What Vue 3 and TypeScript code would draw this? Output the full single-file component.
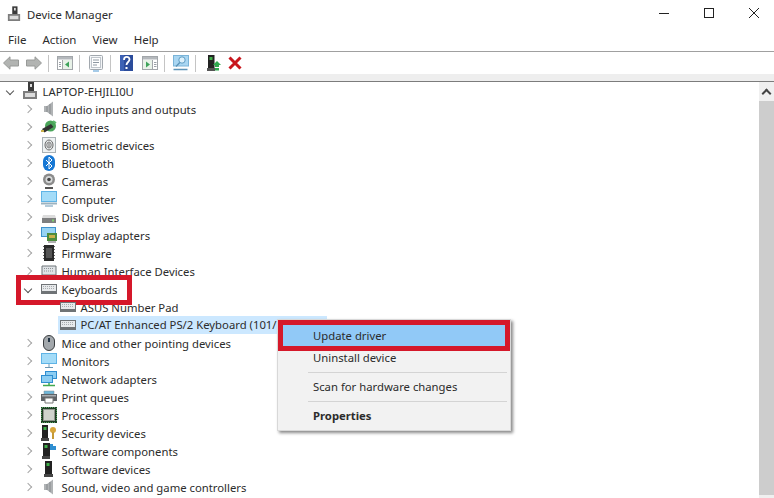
<template>
  <div class="window">
    <header class="titlebar">
      <svg class="app-icon" width="14" height="16" viewBox="0 0 16 18">
        <use href="#pc" />
      </svg>
      <span class="title">Device Manager</span>
      <div class="win-controls">
        <svg width="10" height="10" viewBox="0 0 10 10"><path d="M0 5.500h10" stroke="#222" fill="none" /></svg>
        <svg width="10" height="10" viewBox="0 0 10 10"><rect x=".5" y=".5" width="9" height="9" stroke="#222" fill="none" /></svg>
        <svg width="10" height="10" viewBox="0 0 10 10"><path d="M0 0l10 10M10 0L0 10" stroke="#222" fill="none" /></svg>
      </div>
    </header>
    <nav class="menubar">
      <span v-for="m in menus" :key="m">{{ m }}</span>
    </nav>
    <div class="toolbar">
      <svg class="back" width="16" height="14" viewBox="0 0 16 14"><path d="M.5 7L7 .8V4h8.500v6H7v3.200z" fill="#b2b4b2" stroke="#989a98" /></svg>
      <svg class="fwd" width="16" height="14" viewBox="0 0 16 14"><path d="M15.500 7L9 .8V4H.5v6H9v3.200z" fill="#b2b4b2" stroke="#989a98" /></svg>
      <i class="sep"></i>
      <svg width="16" height="14" viewBox="0 0 16 14">
        <rect x=".5" y=".5" width="15" height="13" fill="#fff" stroke="#a2a6aa" />
        <rect x="1" y="1" width="14" height="2.500" fill="#b4b8bc" />
        <path d="M5.500 4v9" stroke="#a2a6aa" />
        <path d="M2 6.500h2M2 8.500h2M2 10.500h2" stroke="#9aa0a6" />
        <rect x="6" y="4" width="9" height="9" fill="#e8f2e8" />
        <path d="M12 5.500v6L8 8.500z" fill="#3ea35a" />
      </svg>
      <i class="sep"></i>
      <svg class="doc" width="16" height="17" viewBox="0 0 16 17">
        <rect x="1.500" y=".5" width="13" height="14" rx="1" fill="#f4f6f8" stroke="#a2a8ae" />
        <rect x="3.500" y="2.500" width="9" height="10" fill="#fff" stroke="#c0c6cc" />
        <path d="M5 5h6M5 7.500h6M5 10h4" stroke="#8e98a2" />
        <path d="M5 16h6" stroke="#6aa8d8" stroke-width="1.200" />
      </svg>
      <i class="sep"></i>
      <svg class="help" width="13" height="16" viewBox="0 0 13 16">
        <rect width="13" height="16" fill="#2b4c9b" />
        <rect width="4" height="16" fill="#3d62b5" />
        <path d="M4 5c0-4 5.500-4 5.500-.5C9.500 7 6.500 7 6.500 10" stroke="#fff" stroke-width="1.800" fill="none" />
        <path d="M5.500 12h2v2h-2z" fill="#fff" />
      </svg>
      <svg class="panel" width="16" height="14" viewBox="0 0 16 14">
        <rect x=".5" y=".5" width="15" height="13" fill="#fff" stroke="#a2a6aa" />
        <rect x="1" y="1" width="14" height="2.500" fill="#b4b8bc" />
        <path d="M10.500 4v9" stroke="#a2a6aa" />
        <rect x="1" y="4" width="9" height="9" fill="#e8f2e8" />
        <path d="M4 5.500v6l4-3z" fill="#3ea35a" />
        <path d="M12 6.500h2.500M12 8.500h2.500M12 10.500h2.500" stroke="#9aa0a6" />
      </svg>
      <i class="sep"></i>
      <svg width="16" height="16" viewBox="0 0 16 16">
        <rect x=".5" y=".5" width="15" height="10.500" fill="#a9d6f2" stroke="#7ab4d8" />
        <circle cx="9" cy="5" r="3.200" fill="#dcf0fb" stroke="#5d9cc4" />
        <path d="M6.800 7.500L3 11.500M.5 14.500h14" stroke="#5d94b8" stroke-width="1.300" />
      </svg>
      <i class="sep"></i>
      <svg class="scan" width="14" height="16" viewBox="0 0 14 16">
        <rect x="1" y="0" width="6.500" height="13" fill="#222" />
        <rect x="2.500" y="2" width="3" height="3" fill="#3fae49" />
        <path d="M0 13h8v3H0z" fill="#555" />
        <path d="M10 6l4 4h-2v2H8v-2H6z" fill="#2fa84f" />
        <path d="M8 13h4v2.500H8z" fill="#2fa84f" />
      </svg>
      <svg class="remove" width="14" height="14" viewBox="0 0 14 14"><path d="M1.500 1.500l11 11M12.500 1.500l-11 11" stroke="#c8161d" stroke-width="3" /></svg>
    </div>
    <div class="strip"></div>
    <div class="content">
      <main class="tree">
        <div class="row root">
          <span class="caret open"></span>
          <svg class="icon" width="16" height="18" viewBox="0 0 16 18"><use href="#pc" /></svg>
          <span>LAPTOP-EHJILI0U</span>
        </div>
        <template v-for="d in devices" :key="d.name">
          <div class="row" :class="{ child: d.child }">
            <span class="caret" :class="{ open: d.open, none: d.child }"></span>
            <svg class="icon" width="16" height="16" viewBox="0 0 16 16" v-html="icons[d.icon]"></svg>
            <span class="label" :class="{ selected: d.selected }">{{ d.name }}</span>
          </div>
        </template>
        <div class="mark-keyboards"></div>
      </main>
      <aside class="scrollbar">
        <div class="up"><span></span></div>
        <div class="thumb"></div>
      </aside>
      <ul class="menu">
        <li class="active">Update driver</li>
        <li>Uninstall device</li>
        <li class="divider"></li>
        <li>Scan for hardware changes</li>
        <li class="divider"></li>
        <li class="bold">Properties</li>
      </ul>
    </div>
    <svg width="0" height="0" class="defs">
      <symbol id="pc" viewBox="0 0 16 18">
        <rect x="6" y="0" width="6" height="10" fill="#3a3a3a" />
        <rect x="8" y="2" width="2" height="3" fill="#ddd" />
        <path d="M1 9h14v8H1z" fill="#7d7d7d" />
        <path d="M3 11h10v4H3z" fill="#dcdcdc" />
      </symbol>
    </svg>
  </div>
</template>

<script setup lang="ts">
interface Device {
  name: string
  icon: string
  open?: boolean
  child?: boolean
  selected?: boolean
}

const menus = ['File', 'Action', 'View', 'Help']

const icons: Record<string, string> = {
  audio: '<path d="M3 5h3l6-4.500v15L6 11H3z" fill="#b0b3b5"/><path d="M6 5v6M9 3v10" stroke="#85898c"/>',
  battery: '<circle cx="9.500" cy="7" r="5.500" fill="#4aa55a"/><path d="M1 10l9-5 2.500 3-9 5.500z" fill="#333"/><path d="M12 2l3 2" stroke="#5cb86c" stroke-width="2"/><path d="M0 12h3" stroke="#c9b04a" stroke-width="2"/>',
  bio: '<rect x="1.500" y=".5" width="13" height="15" fill="#eef2f3" stroke="#a9b1b5"/><ellipse cx="8" cy="8" rx="4" ry="5" fill="none" stroke="#666"/><ellipse cx="8" cy="8" rx="2.200" ry="3" fill="none" stroke="#777"/><path d="M8 6v4" stroke="#666"/>',
  bt: '<rect x="2" y="0" width="12" height="16" rx="6" fill="#1577d4"/><path d="M5 5l6 6-3 3V2l3 3-6 6" stroke="#fff" fill="none"/>',
  camera: '<circle cx="8" cy="6.500" r="6" fill="#8b8b8b"/><circle cx="8" cy="6.500" r="3.500" fill="#d7dadb"/><circle cx="8" cy="6.500" r="1.800" fill="#444"/><path d="M4 15h8" stroke="#555" stroke-width="2"/>',
  computer: '<rect x="0" y="0" width="16" height="11" fill="#5fb4e6"/><rect x="1" y="1" width="14" height="9" fill="#a4dcf8"/><path d="M0 12.500h16" stroke="#9ab2c0" stroke-width="2"/><path d="M4 15h8" stroke="#6a97b4"/>',
  disk: '<path d="M1 9h14v5H1z" fill="#7e7f80"/><path d="M2 6h12l1 3H1z" fill="#dcdcdc"/><path d="M11 11.500h2" stroke="#7ed06d" stroke-width="2"/>',
  display: '<rect x="0" y="0" width="15" height="10" fill="#3f93cf"/><rect x="1" y="1" width="13" height="8" fill="#97d3f4"/><rect x="6" y="6" width="10" height="8" fill="#4d8c3d"/><path d="M8 8h6v3H8z" fill="#c9b04a"/><path d="M7 15h8" stroke="#666"/>',
  chip: '<rect x="3" y="0" width="10" height="16" fill="#2a2a2a"/><path d="M2 1.500h1M2 4.500h1M2 7.500h1M2 10.500h1M2 13.500h1M13 1.500h1M13 4.500h1M13 7.500h1M13 10.500h1M13 13.500h1" stroke="#666"/><rect x="5" y="3" width="6" height="10" fill="#555"/>',
  hid: '<path d="M1 3h14v9H1z" fill="#dfe3e6" stroke="#6f7478"/><path d="M3 5.500h10M3 8h10" stroke="#8d9296" stroke-dasharray="1 1"/>',
  keyboard: '<rect x="0" y="3" width="16" height="10" fill="#6f7376"/><rect x="1" y="4" width="14" height="6" fill="#e7e9eb"/><path d="M2 5.500h12M2 7.500h12" stroke="#a8acaf" stroke-dasharray="1 1"/>',
  mouse: '<rect x="2.500" y=".5" width="11" height="15" rx="5.500" fill="#a3a8ac" stroke="#3a3d40"/><path d="M8 3v4" stroke="#234" stroke-width="2"/>',
  monitor: '<rect x="0" y="0" width="16" height="11" fill="#5fb4e6"/><rect x="1" y="1" width="14" height="9" fill="#a4dcf8"/><path d="M8 11v3M4 14.500h8" stroke="#6a97b4"/>',
  network: '<rect x="4" y="0" width="12" height="8" fill="#2f8ed1"/><rect x="5" y="1" width="10" height="6" fill="#8ccdf2"/><rect x="0" y="4" width="12" height="8" fill="#2f8ed1"/><rect x="1" y="5" width="10" height="6" fill="#8ccdf2"/><path d="M2 14.500h12M8 12v3" stroke="#42a84f" stroke-width="1.500"/>',
  print: '<path d="M3 2h10v3H3z" fill="#6fb9dc" stroke="#7d8a92" stroke-width=".5"/><path d="M0 5h16v7H0z" fill="#5f6367"/><path d="M1 6h14v1.500H1z" fill="#a8adb1"/><path d="M4 9h8v5H4z" fill="#fff" stroke="#777"/>',
  cpu: '<rect x="0" y="0" width="16" height="16" fill="#1f3d24"/><path d="M1 .5h14M1 15.500h14M.5 1v14M15.500 1v14" stroke="#57a163" stroke-dasharray="1 1"/><rect x="2.500" y="2.500" width="11" height="11" fill="#cfd3cc" stroke="#8f958c"/>',
  security: '<rect x="1" y="0" width="6" height="13" fill="#222"/><rect x="2.500" y="2" width="3" height="3" fill="#3fae49"/><path d="M0 13h8v3H0z" fill="#444"/><circle cx="12" cy="5" r="3" fill="#d9a63a"/><path d="M12 7v7" stroke="#c69a36" stroke-width="2"/>',
  component: '<rect x="2" y="0" width="7" height="13" fill="#222"/><rect x="3.500" y="2" width="3" height="3" fill="#3fae49"/><path d="M1 13h8v3H1z" fill="#444"/><path d="M9 1h3v2h3v4H9z" fill="#2f8ed1"/>',
  softdev: '<rect x="4" y="0" width="7" height="13" fill="#222"/><rect x="5.500" y="2" width="3" height="3" fill="#3fae49"/><path d="M3 13h9v3H3z" fill="#444"/>',
}

const devices: Device[] = [
  { name: 'Audio inputs and outputs', icon: 'audio' },
  { name: 'Batteries', icon: 'battery' },
  { name: 'Biometric devices', icon: 'bio' },
  { name: 'Bluetooth', icon: 'bt' },
  { name: 'Cameras', icon: 'camera' },
  { name: 'Computer', icon: 'computer' },
  { name: 'Disk drives', icon: 'disk' },
  { name: 'Display adapters', icon: 'display' },
  { name: 'Firmware', icon: 'chip' },
  { name: 'Human Interface Devices', icon: 'hid' },
  { name: 'Keyboards', icon: 'keyboard', open: true },
  { name: 'ASUS Number Pad', icon: 'keyboard', child: true },
  { name: 'PC/AT Enhanced PS/2 Keyboard (101/102-Key)', icon: 'keyboard', child: true, selected: true },
  { name: 'Mice and other pointing devices', icon: 'mouse' },
  { name: 'Monitors', icon: 'monitor' },
  { name: 'Network adapters', icon: 'network' },
  { name: 'Print queues', icon: 'print' },
  { name: 'Processors', icon: 'cpu' },
  { name: 'Security devices', icon: 'security' },
  { name: 'Software components', icon: 'component' },
  { name: 'Software devices', icon: 'softdev' },
  { name: 'Sound, video and game controllers', icon: 'audio' },
]
</script>

<style>
html, body { margin: 0; background: #fff; overflow: hidden; }
</style>

<style scoped>
.window {
  width: 774px;
  height: 498px;
  overflow: hidden;
  display: flex;
  flex-direction: column;
  font-family: "Noto Sans", "Open Sans", sans-serif;
  font-size: 11.300px;
  color: #2c2c2c;
  background: #fff;
}
.titlebar {
  height: 28px;
  display: flex;
  align-items: center;
  padding-left: 7px;
  flex: none;
}
.title { margin-left: 6px; }
.win-controls { margin-left: auto; display: flex; gap: 35px; padding-right: 15px; margin-top: -3px; }
.menubar {
  height: 23px;
  display: flex;
  gap: 16px;
  padding-left: 8px;
  align-items: center;
  border-bottom: 1px solid #a0a0a0;
  flex: none;
  font-size: 11.500px;
}
.toolbar {
  height: 22px;
  display: flex;
  align-items: center;
  padding-left: 3px;
  flex: none;
}
.fwd { margin-left: 7px; }
.sep { width: 1px; height: 17px; background: #c4c4c4; margin: 0 8px 0 6px; }
.help { margin-left: 1px; }
.panel { margin-left: 9px; }
.scan { margin-left: 3px; }
.remove { margin-left: 7px; }
.strip { height: 7px; background: #eeeeee; border-bottom: 1px solid #7c7c7c; flex: none; }
.content { flex: 1; display: flex; position: relative; min-height: 0; }
.tree { flex: 1; position: relative; }
.row { height: 18px; display: flex; align-items: center; white-space: nowrap; }
.caret {
  width: 5px;
  height: 5px;
  margin-left: 25px;
  margin-right: 9.500px;
  border-right: 1.500px solid #a6a6a6;
  border-top: 1.500px solid #a6a6a6;
  transform: rotate(45deg);
  flex: none;
}
.caret.open { border-color: #555; transform: rotate(135deg); }
.caret.none { visibility: hidden; margin-right: 28.500px; }
.row.root .caret { margin-left: 7px; margin-right: 8.500px; }
.row .icon { flex: none; margin-right: 5px; }
.label.selected {
  background: #cce8ff;
  height: 18px;
  line-height: 18px;
  width: 246px;
  overflow: hidden;
  margin-left: -23px;
  padding-left: 23px;
}
.row.child .icon { position: relative; z-index: 1; }
.mark-keyboards {
  position: absolute;
  left: 16px;
  top: 193px;
  width: 116px;
  height: 30px;
  box-sizing: border-box;
  border: 5px solid #d5182a;
}
.scrollbar {
  position: absolute;
  right: 0;
  top: 0;
  bottom: 0;
  width: 15px;
  background: #f0f0f0;
  display: flex;
  flex-direction: column;
}
.up { height: 19px; display: flex; align-items: center; justify-content: center; flex: none; }
.up span {
  width: 5px;
  height: 5px;
  margin-top: 4px;
  border-left: 2px solid #444;
  border-top: 2px solid #444;
  transform: rotate(45deg);
}
.thumb { flex: 1; background: #cdcdcd; margin-bottom: 3px; }
.menu {
  position: absolute;
  left: 278px;
  top: 238px;
  width: 232px;
  margin: 0;
  padding: 0 0 3px;
  list-style: none;
  box-sizing: border-box;
  background: #f2f2f2;
  box-shadow: 0 0 0 1px #d8d8d8, 2px 2px 3px 1px #888;
}
.menu li { height: 22px; line-height: 22px; padding-left: 35px; }
.menu li.active {
  height: 21px;
  line-height: 21px;
  background: #91c9f7;
  border: 5px solid #d5182a;
  padding-left: 30px;
  margin-bottom: -4px;
  position: relative;
}
.menu li.divider { height: 1px; background: #d4d4d4; margin: 3px 3px 3px 30px; padding: 0; }
.menu li.bold { font-weight: 700; }
.defs { position: absolute; }
</style>
